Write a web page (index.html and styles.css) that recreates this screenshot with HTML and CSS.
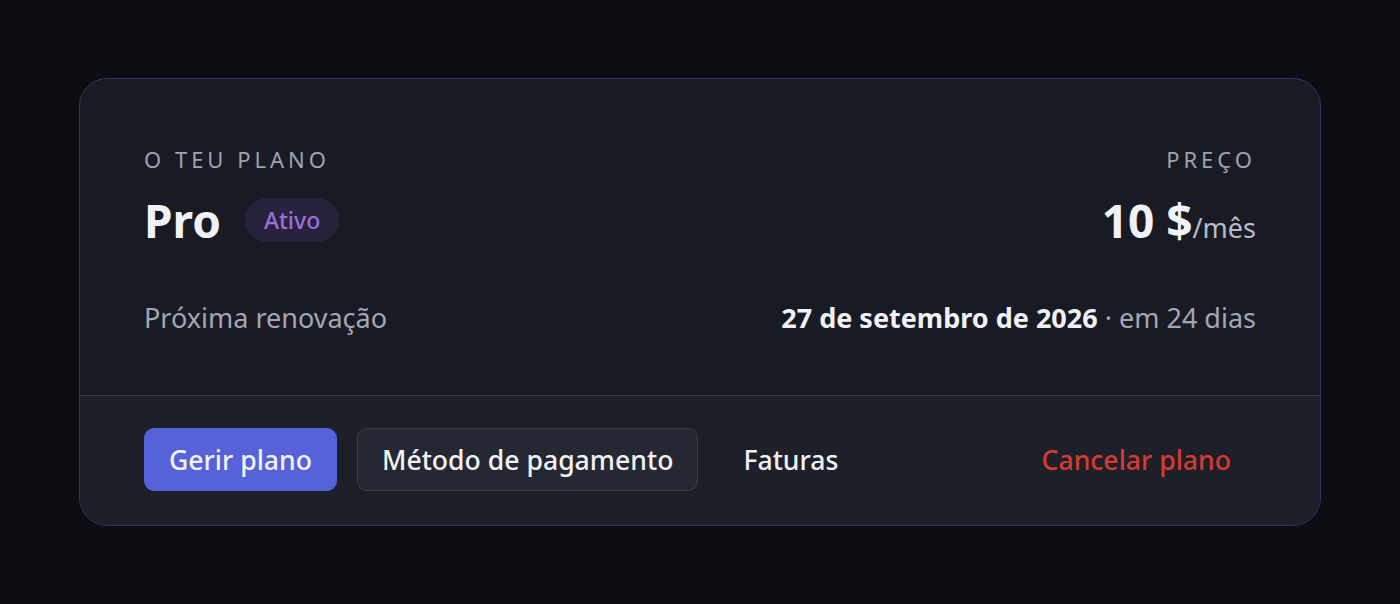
FILE: index.html
```html
<!DOCTYPE html>
<html lang="pt">
<head>
    <meta charset="UTF-8">
    <meta name="viewport" content="width=device-width, initial-scale=1.0">
    <title>O teu plano</title>
    <link rel="stylesheet" href="styles.css">
</head>
<body>
    <div class="plan-card">
        <div class="plan-body">
            <div class="plan-head">
                <div class="plan-info">
                    <div class="label">O teu plano</div>
                    <div class="plan-name">
                        <span class="name">Pro</span>
                        <span class="badge">Ativo</span>
                    </div>
                </div>
                <div class="plan-price">
                    <div class="label">Preço</div>
                    <div class="price">10 $<span class="period">/mês</span></div>
                </div>
            </div>
            <div class="renewal">
                <span class="renewal-label">Próxima renovação</span>
                <span class="renewal-date"><strong>27 de setembro de 2026</strong> · em 24 dias</span>
            </div>
        </div>
        <div class="plan-actions">
            <button class="btn btn-primary">Gerir plano</button>
            <button class="btn btn-outline">Método de pagamento</button>
            <button class="btn btn-ghost">Faturas</button>
            <button class="btn btn-danger">Cancelar plano</button>
        </div>
    </div>
</body>
</html>
```

FILE: styles.css
```css
body {
    margin: 0;
    padding: 78px 79px;
    background-color: #0c0d12;
    font-family: "Noto Sans", sans-serif;
    color: #f1f2f6;
}
.plan-card {
    background-color: #191b24;
    border: 1px solid #30366f;
    border-radius: 28px;
    overflow: hidden;
}
.plan-body {
    padding: 66px 64px 59px;
}
.plan-head {
    display: flex;
    justify-content: space-between;
}
.plan-price {
    text-align: right;
}
.label {
    font-size: 22px;
    letter-spacing: 4px;
    text-transform: uppercase;
    color: #9fa2b0;
    line-height: 28px;
}
.plan-name {
    display: flex;
    align-items: center;
    gap: 24px;
    margin-top: 22px;
    height: 50px;
}
.name {
    font-size: 46px;
    font-weight: 700;
    line-height: 50px;
}
.badge {
    background-color: #28233c;
    color: #9b70dc;
    font-size: 23px;
    font-weight: 500;
    padding: 6px 19px;
    border-radius: 22px;
    line-height: 32px;
}
.price {
    margin-top: 22px;
    font-size: 46px;
    font-weight: 700;
    line-height: 50px;
}
.period {
    font-size: 27px;
    font-weight: 400;
    color: #b9bcc8;
}
.renewal {
    display: flex;
    justify-content: space-between;
    align-items: center;
    margin-top: 47px;
    font-size: 27px;
    line-height: 36px;
    color: #a3a6b3;
}
.renewal-date strong {
    color: #f1f2f6;
}
.plan-actions {
    display: flex;
    align-items: center;
    gap: 20px;
    padding: 32px 64px 34px;
    background-color: #1d1f29;
    border-top: 1px solid #393c48;
}
.btn {
    font-family: inherit;
    font-size: 26.6px;
    font-weight: 500;
    height: 63px;
    padding: 0 24px;
    border-radius: 10px;
    border: 1px solid transparent;
    background: none;
    color: #f1f2f6;
    cursor: pointer;
}
.btn-primary {
    background-color: #5562d8;
    border-color: #5562d8;
}
.btn-outline {
    background-color: #252832;
    border-color: #3b3e49;
}
.btn-danger {
    margin-left: auto;
    color: #d33b33;
}
```
